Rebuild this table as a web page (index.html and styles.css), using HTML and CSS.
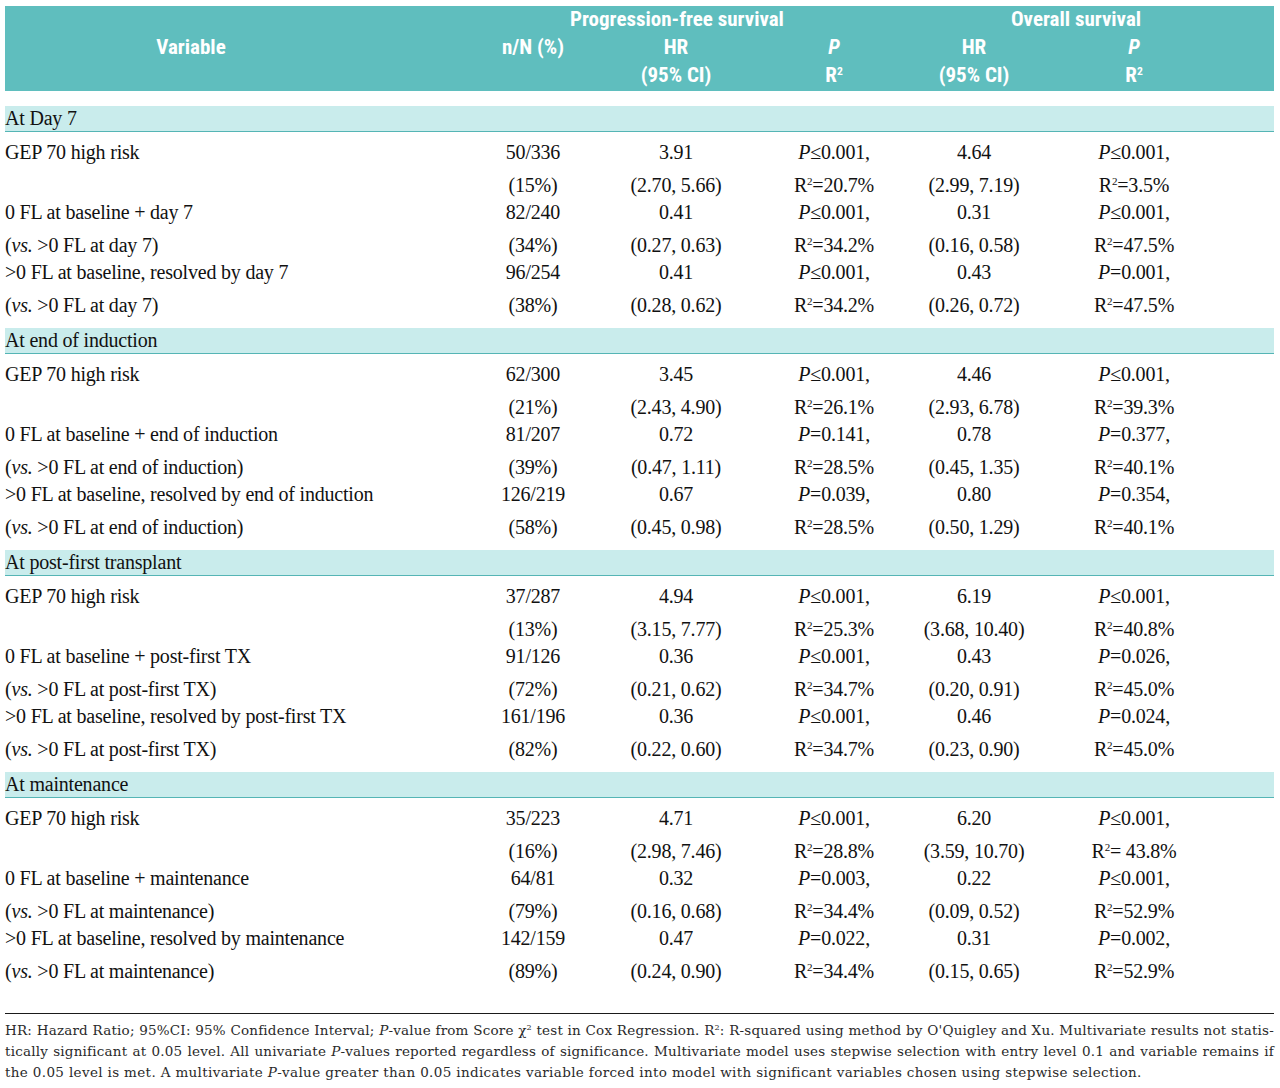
FILE: index.html
```html
<!DOCTYPE html>
<html lang="en">
<head>
<meta charset="utf-8">
<title>Table</title>
<link rel="stylesheet" href="styles.css">
</head>
<body>
<table class="tbl">
  <colgroup>
    <col class="c-var"><col class="c-n"><col class="c-hr1"><col class="c-p1"><col class="c-hr2"><col class="c-p2">
  </colgroup>
  <thead>
    <tr class="h1">
      <th></th>
      <th colspan="3" class="span-pfs">Progression-free survival</th>
      <th colspan="2" class="span-os">Overall survival</th>
    </tr>
    <tr class="h2">
      <th class="h-var">Variable</th>
      <th>n/N (%)</th>
      <th>HR</th>
      <th><i>P</i></th>
      <th>HR</th>
      <th class="last"><i>P</i></th>
    </tr>
    <tr class="h3">
      <th></th>
      <th></th>
      <th>(95% CI)</th>
      <th>R<sup>2</sup></th>
      <th>(95% CI)</th>
      <th class="last">R<sup>2</sup></th>
    </tr>
  </thead>
  <tbody>
    <tr class="gap"><td colspan="6"></td></tr>

    <tr class="sec"><td colspan="6">At Day 7</td></tr>
    <tr class="l1 first"><td class="var">GEP 70 high risk</td><td>50/336</td><td>3.91</td><td><i>P</i>≤0.001,</td><td>4.64</td><td class="last"><i>P</i>≤0.001,</td></tr>
    <tr class="l2"><td class="var"></td><td>(15%)</td><td>(2.70, 5.66)</td><td>R<sup>2</sup>=20.7%</td><td>(2.99, 7.19)</td><td class="last">R<sup>2</sup>=3.5%</td></tr>
    <tr class="l1"><td class="var">0 FL at baseline + day 7</td><td>82/240</td><td>0.41</td><td><i>P</i>≤0.001,</td><td>0.31</td><td class="last"><i>P</i>≤0.001,</td></tr>
    <tr class="l2"><td class="var">(<i>vs.</i> &gt;0 FL at day 7)</td><td>(34%)</td><td>(0.27, 0.63)</td><td>R<sup>2</sup>=34.2%</td><td>(0.16, 0.58)</td><td class="last">R<sup>2</sup>=47.5%</td></tr>
    <tr class="l1"><td class="var">&gt;0 FL at baseline, resolved by day 7</td><td>96/254</td><td>0.41</td><td><i>P</i>≤0.001,</td><td>0.43</td><td class="last"><i>P</i>=0.001,</td></tr>
    <tr class="l2 end"><td class="var">(<i>vs.</i> &gt;0 FL at day 7)</td><td>(38%)</td><td>(0.28, 0.62)</td><td>R<sup>2</sup>=34.2%</td><td>(0.26, 0.72)</td><td class="last">R<sup>2</sup>=47.5%</td></tr>

    <tr class="sec"><td colspan="6">At end of induction</td></tr>
    <tr class="l1 first"><td class="var">GEP 70 high risk</td><td>62/300</td><td>3.45</td><td><i>P</i>≤0.001,</td><td>4.46</td><td class="last"><i>P</i>≤0.001,</td></tr>
    <tr class="l2"><td class="var"></td><td>(21%)</td><td>(2.43, 4.90)</td><td>R<sup>2</sup>=26.1%</td><td>(2.93, 6.78)</td><td class="last">R<sup>2</sup>=39.3%</td></tr>
    <tr class="l1"><td class="var">0 FL at baseline + end of induction</td><td>81/207</td><td>0.72</td><td><i>P</i>=0.141,</td><td>0.78</td><td class="last"><i>P</i>=0.377,</td></tr>
    <tr class="l2"><td class="var">(<i>vs.</i> &gt;0 FL at end of induction)</td><td>(39%)</td><td>(0.47, 1.11)</td><td>R<sup>2</sup>=28.5%</td><td>(0.45, 1.35)</td><td class="last">R<sup>2</sup>=40.1%</td></tr>
    <tr class="l1"><td class="var">&gt;0 FL at baseline, resolved by end of induction</td><td>126/219</td><td>0.67</td><td><i>P</i>=0.039,</td><td>0.80</td><td class="last"><i>P</i>=0.354,</td></tr>
    <tr class="l2 end"><td class="var">(<i>vs.</i> &gt;0 FL at end of induction)</td><td>(58%)</td><td>(0.45, 0.98)</td><td>R<sup>2</sup>=28.5%</td><td>(0.50, 1.29)</td><td class="last">R<sup>2</sup>=40.1%</td></tr>

    <tr class="sec"><td colspan="6">At post-first transplant</td></tr>
    <tr class="l1 first"><td class="var">GEP 70 high risk</td><td>37/287</td><td>4.94</td><td><i>P</i>≤0.001,</td><td>6.19</td><td class="last"><i>P</i>≤0.001,</td></tr>
    <tr class="l2"><td class="var"></td><td>(13%)</td><td>(3.15, 7.77)</td><td>R<sup>2</sup>=25.3%</td><td>(3.68, 10.40)</td><td class="last">R<sup>2</sup>=40.8%</td></tr>
    <tr class="l1"><td class="var">0 FL at baseline + post-first TX</td><td>91/126</td><td>0.36</td><td><i>P</i>≤0.001,</td><td>0.43</td><td class="last"><i>P</i>=0.026,</td></tr>
    <tr class="l2"><td class="var">(<i>vs.</i> &gt;0 FL at post-first TX)</td><td>(72%)</td><td>(0.21, 0.62)</td><td>R<sup>2</sup>=34.7%</td><td>(0.20, 0.91)</td><td class="last">R<sup>2</sup>=45.0%</td></tr>
    <tr class="l1"><td class="var">&gt;0 FL at baseline, resolved by post-first TX</td><td>161/196</td><td>0.36</td><td><i>P</i>≤0.001,</td><td>0.46</td><td class="last"><i>P</i>=0.024,</td></tr>
    <tr class="l2 end"><td class="var">(<i>vs.</i> &gt;0 FL at post-first TX)</td><td>(82%)</td><td>(0.22, 0.60)</td><td>R<sup>2</sup>=34.7%</td><td>(0.23, 0.90)</td><td class="last">R<sup>2</sup>=45.0%</td></tr>

    <tr class="sec"><td colspan="6">At maintenance</td></tr>
    <tr class="l1 first"><td class="var">GEP 70 high risk</td><td>35/223</td><td>4.71</td><td><i>P</i>≤0.001,</td><td>6.20</td><td class="last"><i>P</i>≤0.001,</td></tr>
    <tr class="l2"><td class="var"></td><td>(16%)</td><td>(2.98, 7.46)</td><td>R<sup>2</sup>=28.8%</td><td>(3.59, 10.70)</td><td class="last">R<sup>2</sup>= 43.8%</td></tr>
    <tr class="l1"><td class="var">0 FL at baseline + maintenance</td><td>64/81</td><td>0.32</td><td><i>P</i>=0.003,</td><td>0.22</td><td class="last"><i>P</i>≤0.001,</td></tr>
    <tr class="l2"><td class="var">(<i>vs.</i> &gt;0 FL at maintenance)</td><td>(79%)</td><td>(0.16, 0.68)</td><td>R<sup>2</sup>=34.4%</td><td>(0.09, 0.52)</td><td class="last">R<sup>2</sup>=52.9%</td></tr>
    <tr class="l1"><td class="var">&gt;0 FL at baseline, resolved by maintenance</td><td>142/159</td><td>0.47</td><td><i>P</i>=0.022,</td><td>0.31</td><td class="last"><i>P</i>=0.002,</td></tr>
    <tr class="l2 end"><td class="var">(<i>vs.</i> &gt;0 FL at maintenance)</td><td>(89%)</td><td>(0.24, 0.90)</td><td>R<sup>2</sup>=34.4%</td><td>(0.15, 0.65)</td><td class="last">R<sup>2</sup>=52.9%</td></tr>
  </tbody>
</table>

<div class="notes">
  <span class="ln just">HR: Hazard Ratio; 95%CI: 95% Confidence Interval; <i>P</i>-value from Score χ<sup>2</sup> test in Cox Regression. R<sup>2</sup>: R-squared using method by O'Quigley and Xu. Multivariate results not statis-</span>
  <span class="ln just">tically significant at 0.05 level. All univariate <i>P</i>-values reported regardless of significance. Multivariate model uses stepwise selection with entry level 0.1 and variable remains if</span>
  <span class="ln tail">the 0.05 level is met. A multivariate <i>P</i>-value greater than 0.05 indicates variable forced into model with significant variables chosen using stepwise selection.</span>
</div>
</body>
</html>
```

FILE: styles.css
```css
html, body {
  margin: 0;
  padding: 0;
  background: #ffffff;
}

body {
  color: #111111;
  font-family: "Liberation Serif", "Times New Roman", serif;
}

.tbl {
  margin: 6px 0 0 5px;
  width: 1269px;
  table-layout: fixed;
  border-collapse: separate;
  border-spacing: 0;
}

.c-var { width: 456px; }
.c-n   { width: 144px; }
.c-hr1 { width: 142px; }
.c-p1  { width: 174px; }
.c-hr2 { width: 106px; }
.c-p2  { width: 247px; }

sup {
  font-size: 0.55em;
  line-height: 0;
  vertical-align: 0.6em;
}

/* ---------- header ---------- */
thead th {
  background: #5fbebe;
  color: #ffffff;
  font-family: "Liberation Sans Narrow", "Roboto Condensed", "DejaVu Sans Condensed", "Liberation Sans", sans-serif;
  font-stretch: condensed;
  font-weight: bold;
  font-size: 21px;
  text-align: center;
  padding: 0;
  white-space: nowrap;
}

thead th.last { padding-right: 33px; }

.h1 th { line-height: 27px; }
.h2 th { line-height: 28px; }
.h3 th { line-height: 28px; padding-bottom: 2px; }

.span-pfs { padding-right: 28px !important; }
.span-os  { padding-right: 43px !important; }
.h-var    { padding-right: 84px !important; }

/* ---------- body ---------- */
.gap td {
  height: 15px;
  padding: 0;
}

tbody td {
  padding: 0;
  font-size: 20px;
  letter-spacing: -0.2px;
  text-align: center;
  white-space: nowrap;
}

tbody td.last { padding-right: 33px; }
tbody td.var  { text-align: left; }

.sec td {
  background: #c9ecec;
  border-bottom: 1px solid #55b5b5;
  line-height: 25px;
  text-align: left;
}

.l1 td { line-height: 26px; }
.l1.first td { padding-top: 7px; }

.l2 td { line-height: 27px; padding-top: 7px; }
.l2.end td { padding-bottom: 9px; }

/* ---------- notes ---------- */
.notes {
  margin: 19px 0 0 5px;
  width: 1269px;
  border-top: 1px solid #1a1a1a;
  padding-top: 6px;
  font-family: "DejaVu Serif", "Liberation Serif", serif;
  font-size: 13.5px;
  letter-spacing: 0.2px;
  line-height: 21px;
  color: #2a2a2a;
}

.notes .ln {
  display: block;
  white-space: nowrap;
}

.notes .ln.just {
  word-spacing: -2px;
  text-align: justify;
  text-align-last: justify;
}

.notes .ln.tail {
  letter-spacing: 0.35px;
}

.notes sup {
  font-size: 0.6em;
}
```
